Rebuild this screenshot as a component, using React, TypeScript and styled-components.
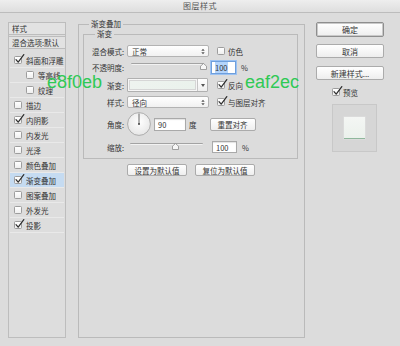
import React from "react";
import styled, { createGlobalStyle } from "styled-components";

const Global = createGlobalStyle`
  html, body { margin: 0; padding: 0; background: #dcdcdc; }
  body { font-family: "Noto Sans CJK SC", "Noto Sans", sans-serif; color: #333; }
  #root { width: 400px; height: 346px; overflow: hidden; }
  * { box-sizing: border-box; }
`;

const Dialog = styled.div`
  position: relative;
  width: 400px;
  height: 346px;
  background: #dcdcdc;
  display: flex;
  flex-direction: column;
`;

const TitleBar = styled.div`
  height: 13px;
  border-bottom: 1px solid #bcbcbc;
  background: linear-gradient(#eeeeee, #dedede);
  display: flex;
  align-items: center;
  justify-content: center;
  font-size: 8px;
  line-height: 12px;
  color: #555;
  letter-spacing: 0.5px;
`;

const Body = styled.div`
  flex: 1;
  display: flex;
  padding: 9px 0 8px 8px;
`;

/* ---------- left panel ---------- */
const LeftPanel = styled.div`
  width: 58px;
  border: 1px solid #bdbdbd;
  background: #dddddd;
  display: flex;
  flex-direction: column;
`;

const HeadCell = styled.div<{ $mt?: number; $bt?: boolean }>`
  height: ${(p) => (p.$bt ? 13 : 12)}px;
  margin-top: ${(p) => p.$mt ?? 0}px;
  border-top: ${(p) => (p.$bt ? "1px solid #bdbdbd" : "none")};
  border-bottom: 1px solid #bdbdbd;
  background: #e2e2e2;
  padding-left: 3px;
  font-size: 7.5px;
  line-height: 11px;
  white-space: nowrap;
  overflow: hidden;
`;

const List = styled.div`
  margin-top: 4px;
  display: flex;
  flex-direction: column;
`;

const ListRow = styled.div<{ $indent?: boolean; $selected?: boolean }>`
  height: 15px;
  display: flex;
  align-items: center;
  gap: 4px;
  padding-left: ${(p) => (p.$indent ? 16 : 4)}px;
  margin: 0 1px;
  border-bottom: 1px solid #e9e9e9;
  background: ${(p) => (p.$selected ? "#c5dbf1" : "transparent")};
  font-size: 7.5px;
  white-space: nowrap;
`;

/* ---------- checkbox ---------- */
const Box = styled.span`
  position: relative;
  flex: none;
  width: 8px;
  height: 8px;
  border: 1px solid #9d9d9d;
  border-radius: 1.5px;
  background: linear-gradient(#ffffff, #efefef);
`;

const Tick = styled.svg`
  position: absolute;
  left: 0px;
  top: -3px;
  width: 10px;
  height: 10px;
  overflow: visible;
`;

const Check = ({ on }: { on?: boolean }) => (
  <Box>
    {on && (
      <Tick viewBox="0 0 10 10">
        <path d="M1 5.6 L3.2 8.2 L8.8 0.6" fill="none" stroke="#2c2c2c" strokeWidth="1.2" strokeLinecap="round" strokeLinejoin="round" />
      </Tick>
    )}
  </Box>
);

/* ---------- middle ---------- */
const Outer = styled.fieldset`
  margin: -3px 0 0 12px;
  width: 227px;
  padding: 0 6px 0 4px;
  border: 1px solid #bababa;
  min-width: 0;
`;

const Legend = styled.legend<{ $ml: number }>`
  margin-left: ${(p) => p.$ml}px;
  padding: 0 2px;
  font-size: 7.5px;
  line-height: 10px;
`;

const Inner = styled.fieldset`
  margin: 0;
  width: 215px;
  padding: 6px 6px 5px 0;
  border: 1px solid #bababa;
  min-width: 0;
  display: flex;
  flex-direction: column;
  gap: 4px;
`;

const Row = styled.div<{ $h: number; $mt?: number }>`
  height: ${(p) => p.$h}px;
  margin-top: ${(p) => p.$mt ?? 0}px;
  display: flex;
  align-items: center;
  font-size: 7.5px;
  white-space: nowrap;
`;

const Label = styled.span`
  width: 40px;
  flex: none;
  text-align: right;
  margin-right: 3px;
`;

const Gap = styled.span<{ $w: number }>`
  flex: none;
  width: ${(p) => p.$w}px;
`;

const Select = styled.div<{ $w: number }>`
  width: ${(p) => p.$w}px;
  height: 12px;
  flex: none;
  display: flex;
  align-items: center;
  justify-content: space-between;
  padding: 0 3px 0 4px;
  border: 1px solid #b3b3b3;
  border-radius: 2px;
  background: linear-gradient(#ffffff, #f1f1f1);
  font-size: 7.5px;
`;

const Arrows = () => (
  <svg width="4" height="7" viewBox="0 0 4 7">
    <path d="M0.3 2.8 L2 0.8 L3.7 2.8 Z M0.3 4.2 L2 6.2 L3.7 4.2 Z" fill="#555" />
  </svg>
);

const GradPick = styled.div`
  width: 81px;
  height: 14px;
  flex: none;
  display: flex;
  border: 1px solid #b0b0b0;
  border-radius: 1px;
  background: #f6f6f6;
`;

const Swatch = styled.div`
  flex: 1;
  margin: 1px;
  background: linear-gradient(to right, #eef3ef, #eaf2ec);
  border: 1px solid #d6d6d6;
`;

const DropPart = styled.div`
  width: 10px;
  flex: none;
  display: flex;
  align-items: center;
  justify-content: center;
  border-left: 1px solid #c6c6c6;
  background: linear-gradient(#ffffff, #eeeeee);
`;

const Input = styled.div<{ $w: number; $h: number; $focus?: boolean }>`
  width: ${(p) => p.$w}px;
  height: ${(p) => p.$h}px;
  flex: none;
  display: flex;
  align-items: center;
  padding-left: 3px;
  border: 1px solid ${(p) => (p.$focus ? "#6f9fdc" : "#a9a9a9")};
  background: #fff;
  box-shadow: ${(p) => (p.$focus ? "0 0 0 1px #9cc2f2" : "inset 0 1px 1px rgba(0,0,0,0.12)")};
  font-size: 7.5px;
`;

const Sel = styled.span`
  background: #b4d4fb;
`;

const SliderWrap = styled.div`
  position: relative;
  width: 76px;
  height: 100%;
  flex: none;
  align-self: flex-start;
`;

const Track = styled.div`
  margin-top: 2px;
  width: 73px;
  height: 2px;
  background: #a3a3a3;
  border-bottom: 1px solid #f2f2f2;
  border-radius: 1px;
`;

const Knob = styled.svg`
  position: absolute;
  top: 2px;
  width: 7px;
  height: 7px;
`;

const Slider = ({ pos }: { pos: number }) => (
  <SliderWrap>
    <Track />
    <Knob viewBox="0 0 7 7" style={{ left: pos }}>
      <path d="M3.5 0.5 L6.5 3.2 L6.5 6.5 L0.5 6.5 L0.5 3.2 Z" fill="#f7f7f7" stroke="#8c8c8c" strokeWidth="0.8" />
    </Knob>
  </SliderWrap>
);

const DialSvg = styled.svg`
  flex: none;
  width: 24px;
  height: 24px;
`;

const Dial = () => (
  <DialSvg viewBox="0 0 24 24">
    <defs>
      <radialGradient id="dg" cx="50%" cy="40%" r="60%">
        <stop offset="0%" stopColor="#ffffff" />
        <stop offset="100%" stopColor="#e6e6e6" />
      </radialGradient>
    </defs>
    <circle cx="12" cy="12" r="11.4" fill="url(#dg)" stroke="#9e9e9e" strokeWidth="0.8" />
    <line x1="12" y1="12" x2="12" y2="1.5" stroke="#444" strokeWidth="0.8" />
    <circle cx="12" cy="12" r="1" fill="#444" />
  </DialSvg>
);

const Btn = styled.div<{ $w?: number; $h: number; $primary?: boolean; $fs?: number }>`
  width: ${(p) => (p.$w ? `${p.$w}px` : "100%")};
  height: ${(p) => p.$h}px;
  flex: none;
  display: flex;
  align-items: center;
  justify-content: center;
  border: 1px solid ${(p) => (p.$primary ? "#8e8e8e" : "#ababab")};
  border-radius: 2px;
  background: linear-gradient(#ffffff, #eeeeee);
  box-shadow: ${(p) => (p.$primary ? "inset 0 0 0 1px #c9c9c9" : "none")};
  font-size: ${(p) => p.$fs ?? 7.5}px;
  white-space: nowrap;
  color: #333;
`;

const BtnRow = styled.div`
  display: flex;
  gap: 8px;
  margin: 5px 0 0 44px;
`;

/* ---------- right ---------- */
const Right = styled.div`
  margin-left: 11px;
  width: 68px;
  display: flex;
  flex-direction: column;
`;

const PreviewRow = styled.div`
  margin: 7px 0 0 16px;
  display: flex;
  align-items: center;
  gap: 3px;
  height: 10px;
  font-size: 7.5px;
`;

const PreviewBox = styled.div`
  margin: 7px 0 0 16px;
  width: 45px;
  height: 48px;
  border: 1px solid #c8c8c8;
  background: #d6d6d6;
  display: flex;
  align-items: center;
  justify-content: center;
`;

const PreviewSquare = styled.div`
  width: 21px;
  height: 22px;
  background: linear-gradient(#f4f6f4, #ebf1ec);
  border-bottom: 1px solid #8fb79c;
  box-shadow: 0 0 0 0.5px #e0e0e0;
`;

const Annot = styled.div<{ $x: number; $y: number }>`
  position: absolute;
  left: ${(p) => p.$x}px;
  top: ${(p) => p.$y}px;
  font-family: "Liberation Sans", Arial, sans-serif;
  font-size: 18px;
  line-height: 18px;
  color: #2fc955;
`;

const items: { name: string; on?: boolean; indent?: boolean; sel?: boolean }[] = [
  { name: "斜面和浮雕", on: true },
  { name: "等高线", indent: true },
  { name: "纹理", indent: true },
  { name: "描边" },
  { name: "内阴影", on: true },
  { name: "内发光" },
  { name: "光泽" },
  { name: "颜色叠加" },
  { name: "渐变叠加", on: true, sel: true },
  { name: "图案叠加" },
  { name: "外发光" },
  { name: "投影", on: true },
];

export default function App() {
  return (
    <Dialog>
      <Global />
      <TitleBar>图层样式</TitleBar>
      <Body>
        <LeftPanel>
          <HeadCell>样式</HeadCell>
          <HeadCell $mt={1} $bt>混合选项:默认</HeadCell>
          <List>
            {items.map((it) => (
              <ListRow key={it.name} $indent={it.indent} $selected={it.sel}>
                <Check on={it.on} />
                {it.name}
              </ListRow>
            ))}
          </List>
        </LeftPanel>

        <Outer>
          <Legend $ml={6}>渐变叠加</Legend>
          <Inner>
            <Legend $ml={11}>渐变</Legend>
            <Row $h={12}>
              <Label>混合模式:</Label>
              <Select $w={82}>
                正常
                <Arrows />
              </Select>
              <Gap $w={8} />
              <Check />
              <Gap $w={3} />
              仿色
            </Row>
            <Row $h={13}>
              <Label>不透明度:</Label>
              <Gap $w={4} />
              <Slider pos={69} />
              <Gap $w={4} />
              <Input $w={25} $h={13} $focus>
                <Sel>100</Sel>
              </Input>
              <Gap $w={5} />
              %
            </Row>
            <Row $h={14}>
              <Label>渐变:</Label>
              <GradPick>
                <Swatch />
                <DropPart>
                  <svg width="4" height="3" viewBox="0 0 4 3">
                    <path d="M0 0 L4 0 L2 3 Z" fill="#555" />
                  </svg>
                </DropPart>
              </GradPick>
              <Gap $w={9} />
              <Check on />
              <Gap $w={3} />
              反向
            </Row>
            <Row $h={12}>
              <Label>样式:</Label>
              <Select $w={82}>
                径向
                <Arrows />
              </Select>
              <Gap $w={8} />
              <Check on />
              <Gap $w={3} />
              与图层对齐
            </Row>
            <Row $h={24}>
              <Label>角度:</Label>
              <Dial />
              <Gap $w={3} />
              <Input $w={32} $h={13}>90</Input>
              <Gap $w={3} />
              度
              <Gap $w={13} />
              <Btn $w={46} $h={13}>重置对齐</Btn>
            </Row>
            <Row $h={12} $mt={1}>
              <Label>缩放:</Label>
              <Gap $w={3} />
              <Slider pos={42} />
              <Gap $w={6} />
              <Input $w={25} $h={12}>100</Input>
              <Gap $w={5} />
              %
            </Row>
          </Inner>
          <BtnRow>
            <Btn $w={60} $h={12}>设置为默认值</Btn>
            <Btn $w={60} $h={12}>复位为默认值</Btn>
          </BtnRow>
        </Outer>

        <Right>
          <Btn $h={15} $primary $fs={8}>确定</Btn>
          <Gap $w={0} style={{ height: 7 }} />
          <Btn $h={14} $fs={8}>取消</Btn>
          <Gap $w={0} style={{ height: 8 }} />
          <Btn $h={14} $fs={8}>新建样式...</Btn>
          <PreviewRow>
            <Check on />
            预览
          </PreviewRow>
          <PreviewBox>
            <PreviewSquare />
          </PreviewBox>
        </Right>
      </Body>
      <Annot $x={47} $y={73}>e8f0eb</Annot>
      <Annot $x={245} $y={73}>eaf2ec</Annot>
    </Dialog>
  );
}
